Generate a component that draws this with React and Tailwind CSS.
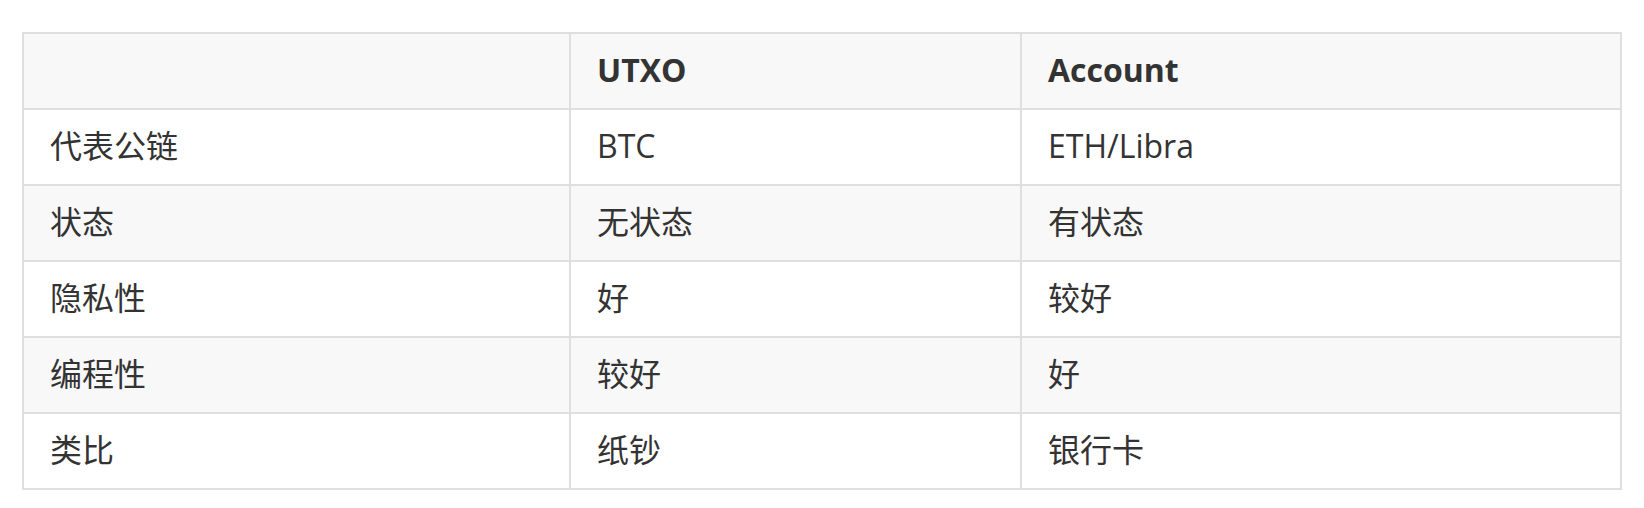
export default function App() {
  const rows = [
    ["代表公链", "BTC", "ETH/Libra"],
    ["状态", "无状态", "有状态"],
    ["隐私性", "好", "较好"],
    ["编程性", "较好", "好"],
    ["类比", "纸钞", "银行卡"],
  ];
  const font = { fontFamily: '"Open Sans", "Noto Sans CJK SC", sans-serif' };
  return (
    <div className="w-[1644px] h-[508px] bg-white pt-[32px] pl-[22px]" style={font}>
      <table className="border-collapse text-[32px] leading-[48px] text-[#333333] w-[1598px] table-fixed">
        <colgroup>
          <col className="w-[547px]" />
          <col className="w-[451px]" />
          <col className="w-[600px]" />
        </colgroup>
        <thead>
          <tr className="bg-[#f8f8f8] h-[76px]">
            <th className="border-2 border-[#dfdfdf] px-[26px] pb-[2px] text-left font-bold"></th>
            <th className="border-2 border-[#dfdfdf] px-[26px] pb-[2px] text-left font-bold">UTXO</th>
            <th className="border-2 border-[#dfdfdf] px-[26px] pb-[2px] text-left font-bold">Account</th>
          </tr>
        </thead>
        <tbody>
          {rows.map((r, i) => (
            <tr key={i} className={(i % 2 === 1 ? "bg-[#f8f8f8]" : "bg-white") + " h-[76px]"}>
              {r.map((c, j) => (
                <td key={j} className="border-2 border-[#dfdfdf] px-[26px] pb-[2px] text-left">{c}</td>
              ))}
            </tr>
          ))}
        </tbody>
      </table>
    </div>
  );
}
